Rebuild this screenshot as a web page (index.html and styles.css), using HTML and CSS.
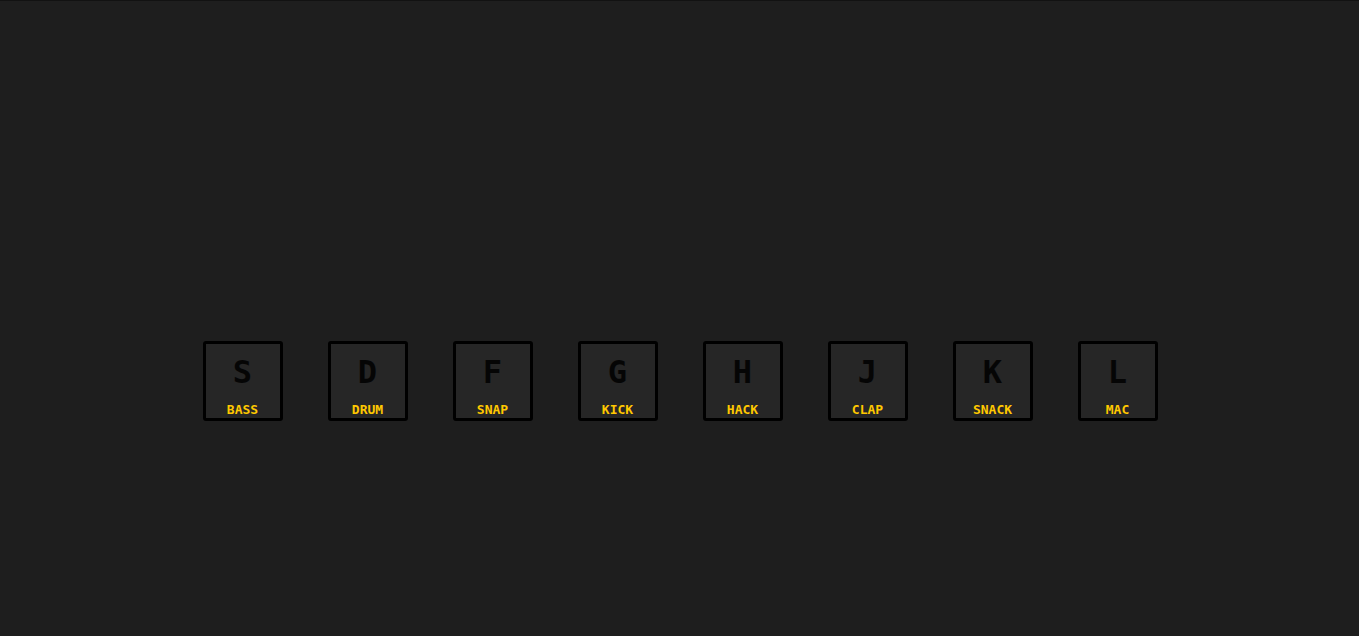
FILE: index.html
```html
<!DOCTYPE html>
<html lang="en">
<head>
<meta charset="utf-8">
<title>Drum Kit</title>
<link rel="stylesheet" href="styles.css">
</head>
<body>
<div class="keys">
  <div class="key"><kbd class="key-letter">S</kbd><span class="sound">bass</span></div>
  <div class="key"><kbd class="key-letter">D</kbd><span class="sound">drum</span></div>
  <div class="key"><kbd class="key-letter">F</kbd><span class="sound">snap</span></div>
  <div class="key"><kbd class="key-letter">G</kbd><span class="sound">kick</span></div>
  <div class="key"><kbd class="key-letter">H</kbd><span class="sound">hack</span></div>
  <div class="key"><kbd class="key-letter">J</kbd><span class="sound">clap</span></div>
  <div class="key"><kbd class="key-letter">K</kbd><span class="sound">snack</span></div>
  <div class="key"><kbd class="key-letter">L</kbd><span class="sound">mac</span></div>
</div>
</body>
</html>
```
FILE: styles.css
```css
html, body {
  margin: 0;
  padding: 0;
}
body {
  background: #1e1e1e;
  border-top: 1px solid #121212;
  height: 635px;
  font-family: "DejaVu Sans Mono", "Liberation Mono", monospace;
}
.keys {
  display: flex;
  justify-content: center;
  gap: 45px;
  padding-top: 340px;
  padding-left: 1px;
}
.key {
  box-sizing: border-box;
  width: 80px;
  height: 80px;
  border: 3px solid #000;
  border-radius: 3px;
  background: #262626;
  display: flex;
  flex-direction: column;
  align-items: center;
  padding-top: 12px;
}
.key-letter {
  font-family: inherit;
  font-size: 32px;
  line-height: 32px;
  font-weight: bold;
  color: #050505;
}
.sound {
  margin-top: 15px;
  font-size: 13px;
  line-height: 13px;
  font-weight: bold;
  text-transform: uppercase;
  color: #ffc800;
}
```
